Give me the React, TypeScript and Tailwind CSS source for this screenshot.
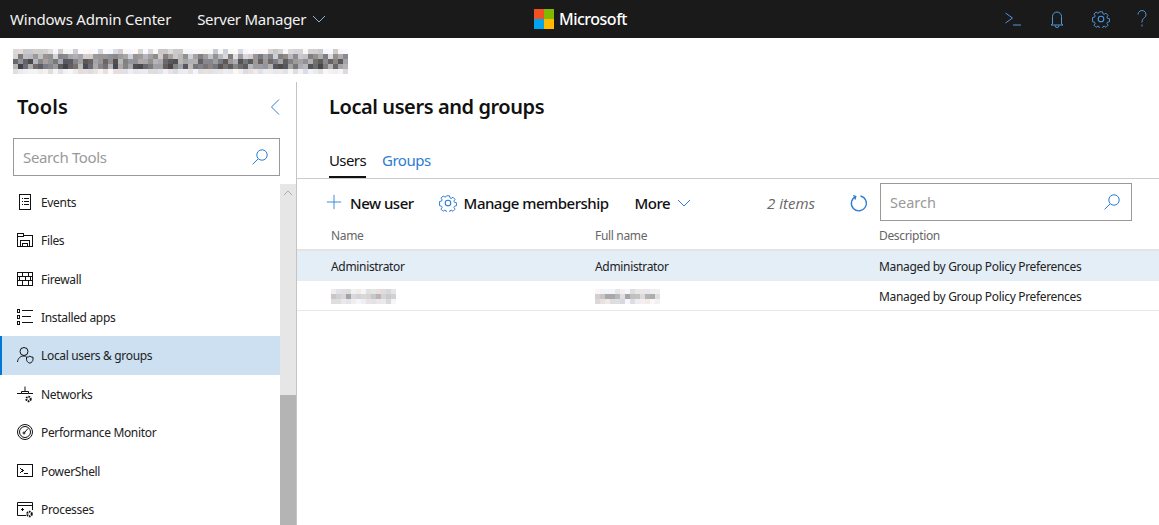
import React from "react";

const Mosaic = ({ w, h, cell, seed, small = false }: { w: number; h: number; cell: number; seed: number; small?: boolean }) => {
  const cols = Math.ceil(w / cell);
  const rows = Math.ceil(h / cell);
  const rects: React.ReactNode[] = [];
  let s = seed;
  const rnd = () => {
    s = (s * 9301 + 49297) % 233280;
    return s / 233280;
  };
  for (let r = 0; r < rows; r++) {
    for (let c = 0; c < cols; c++) {
      const n = rnd();
      let v: number;
      if (small) {
        v = r === 1 ? 160 + n * 65 : 215 + n * 32;
      } else if (r === 0) {
        v = n > 0.55 ? 170 + n * 50 : 245 + n * 8;
      } else if (r === rows - 1) {
        v = 218 + n * 30;
      } else if (r === 1) {
        v = 120 + n * 105;
      } else {
        v = 65 + n * 120;
      }
      const t = rnd();
      const red = Math.round(Math.min(255, v + (t > 0.7 ? 6 : 0)));
      const blue = Math.round(Math.min(255, v + (t < 0.3 ? 8 : 0)));
      rects.push(<rect key={`${r}-${c}`} x={c * cell} y={r * cell} width={cell} height={cell} fill={`rgb(${red},${Math.round(v)},${blue})`} />);
    }
  }
  return (
    <svg width={w} height={h} viewBox={`0 0 ${w} ${h}`} shapeRendering="crispEdges" className="block">
      {rects}
    </svg>
  );
};

const Svg = ({ children, size = 18, stroke = "#111", sw = 1, crisp = false }: { children: React.ReactNode; size?: number; stroke?: string; sw?: number; crisp?: boolean }) => (
  <svg width={size} height={size} viewBox="0 0 18 18" fill="none" stroke={stroke} strokeWidth={sw} shapeRendering={crisp ? "crispEdges" : undefined} className="block shrink-0">
    {children}
  </svg>
);

const Gear = ({ size = 18, stroke = "#2b7cd3" }: { size?: number; stroke?: string }) => (
  <Svg size={size} stroke={stroke} sw={1.1}>
    <circle cx="9" cy="9" r="2.800" />
    <path d="M7.300.8h3.400l.5 2.300 1.400.6 2-1.300 2.400 2.400-1.300 2 .6 1.400 2.300.5v3.400l-2.300.5-.6 1.400 1.300 2-2.400 2.400-2-1.300-1.400.6-.5 2.300H7.300l-.5-2.300-1.400-.6-2 1.300-2.400-2.400 1.300-2-.6-1.400-2.300-.5V7.300l2.300-.5.6-1.400-1.300-2L3.400 1l2 1.300 1.400-.6z" transform="translate(1.100 1.100) scale(0.88)" />
  </Svg>
);

const SearchIcon = () => (
  <Svg size={18} stroke="#2b7cd3">
    <circle cx="11" cy="7" r="5.200" />
    <path d="M7.200 10.800 1.600 16.400" />
  </Svg>
);

const icons: Record<string, React.ReactNode> = {
  Events: (
    <Svg crisp>
      <rect x="3.500" y="1.500" width="11" height="15" />
      <path d="M5.500 5.500h1M8 5.500h5M5.500 8.500h1M8 8.500h5M5.500 11.500h1M8 11.500h5" />
    </Svg>
  ),
  Files: (
    <Svg crisp>
      <path d="M1.500 15.500V2.500h6v2h9v11zM1.500 5.500h6" />
      <path d="M4.500 15.500V9.500h9v6M6.500 15.500v-3h5v3" />
    </Svg>
  ),
  Firewall: (
    <Svg crisp>
      <rect x="1.500" y="2.500" width="15" height="13" />
      <path d="M1.500 6.500h15M1.500 10.500h15M6.500 2.500v4M12.500 2.500v4M3.500 6.500v4M9.500 6.500v4M14.500 6.500v4M6.500 10.500v5M12.500 10.500v5" />
    </Svg>
  ),
  "Installed apps": (
    <Svg crisp>
      <rect x="1.500" y="1.500" width="2" height="3" />
      <rect x="1.500" y="7.500" width="2" height="3" />
      <rect x="1.500" y="13.500" width="2" height="3" />
      <path d="M6 2.500h10.500M6 8.500h8.500M6 14.500h10.500" />
    </Svg>
  ),
  "Local users & groups": (
    <Svg>
      <circle cx="8" cy="5.500" r="4" />
      <path d="M1.500 16c.3-3.500 2.600-6 6.500-6 .9 0 1.600.1 2.300.4" />
      <path d="M10.500 11.200c1.500 0 2.500-.4 3.300-1 .8.600 1.700 1 3.200 1v2c0 2-1.300 3.300-3.200 4-2-.7-3.300-2-3.300-4z" />
    </Svg>
  ),
  Networks: (
    <Svg>
      <path d="M1 8.500h4.500M12.500 8.500H17M9 1.500v4.500M5.500 8.500V6.500h7v2z" />
      <circle cx="12.500" cy="14" r="2.200" strokeWidth="2" strokeDasharray="1.500 0.800" />
    </Svg>
  ),
  "Performance Monitor": (
    <Svg>
      <circle cx="9" cy="9" r="7.500" />
      <circle cx="9" cy="9" r="5.500" />
      <circle cx="8" cy="10" r="1" />
      <path d="m8.500 9.500 3.500-4" />
    </Svg>
  ),
  PowerShell: (
    <Svg crisp>
      <rect x="1.500" y="2.500" width="15" height="12" />
      <path d="M4.500 6.500 7 8.500l-2.500 2M7.500 11.500h4" />
    </Svg>
  ),
  Processes: (
    <Svg>
      <path d="M10 15.500H1.500v-13h15V10M1.500 5.500h15" />
      <path d="M5 9.500h3M6.500 8v3" />
      <circle cx="13.500" cy="14" r="2.300" strokeWidth="2" strokeDasharray="1.500 0.800" />
    </Svg>
  ),
};

const tools = ["Events", "Files", "Firewall", "Installed apps", "Local users & groups", "Networks", "Performance Monitor", "PowerShell", "Processes"];

const Row = ({ name, full, selected, seed }: { name?: string; full?: string; selected?: boolean; seed?: number }) => (
  <div className={`grid h-[30px] grid-cols-[264px_284px_1fr] items-center pl-[34px] text-[12px] tracking-[-0.33px] text-[#222] ${selected ? "bg-[#e4eef7] pt-[2px]" : "border-b border-[#e8e8e8] pt-[2px]"}`}>
    <div>{name ?? <Mosaic w={65} h={15} cell={5} seed={seed!} small />}</div>
    <div>{full ?? <Mosaic w={65} h={15} cell={5} seed={seed! + 7} small />}</div>
    <div>Managed by Group Policy Preferences</div>
  </div>
);

export default function App() {
  return (
    <div className="flex h-[525px] w-[1159px] flex-col overflow-hidden bg-white font-['Noto_Sans',sans-serif] text-[#111]">
      <header className="flex h-[38px] shrink-0 items-center bg-[#1a1a1a] pl-[10px] text-[15px] text-[#f2f2f2]">
        <div className="flex w-[524px] items-center">
          <span className="tracking-[-0.2px]">Windows Admin Center</span>
          <span className="ml-[26px] tracking-[-0.25px]">Server Manager</span>
          <svg width="14" height="8" viewBox="0 0 14 8" fill="none" stroke="#8fb4dc" className="ml-[6px]">
            <path d="m1 1 6 6 6-6" />
          </svg>
        </div>
        <div className="grid h-[20px] w-[20px] grid-cols-2 gap-0">
          <div className="bg-[#f25022]" />
          <div className="bg-[#7fba00]" />
          <div className="bg-[#00a4ef]" />
          <div className="bg-[#ffb900]" />
        </div>
        <span className="ml-[5px] text-[16px] font-medium tracking-[-0.5px] text-white">Microsoft</span>
        <div className="ml-auto flex items-center gap-[26px] pr-[11px]">
          <Svg stroke="#4f97dd">
            <path d="m1.500 3 7 5-7 5M9 15h8" />
          </Svg>
          <Svg stroke="#4f97dd">
            <path d="M4.500 14V6.500a4.500 4.500 0 0 1 9 0V14l1.500 1H3zM7 15.500a2 2 0 0 0 4 0" />
          </Svg>
          <Gear stroke="#4f97dd" />
          <svg width="12" height="18" viewBox="0 0 12 18" fill="none" stroke="#4f97dd">
            <path d="M2 4.500a4 4 0 1 1 6.300 3.300C6.800 8.900 6 10 6 12.500M6 14.500v2" />
          </svg>
        </div>
      </header>

      <div className="flex h-[44px] shrink-0 items-center pt-[2px] pl-[13px]">
        <Mosaic w={335} h={25} cell={5} seed={42} />
      </div>

      <div className="flex min-h-0 flex-1">
        <aside className="flex w-[297px] shrink-0 flex-col border-r border-[#c4c4c4]">
          <div className="flex h-[56px] shrink-0 items-center justify-between pr-[16px] pb-[6px] pl-[17px]">
            <span className="text-[20px] font-semibold tracking-[0.2px]">Tools</span>
            <svg width="10" height="16" viewBox="0 0 10 16" fill="none" stroke="#2b7cd3">
              <path d="M9 .5 1.500 8 9 15.500" />
            </svg>
          </div>
          <div className="mr-[16px] ml-[13px] flex h-[38px] shrink-0 items-center justify-between border border-[#999] pr-[10px] pl-[9px] text-[15px] tracking-[-0.35px] text-[#999]">
            <span>Search Tools</span>
            <SearchIcon />
          </div>
          <div className="mt-[6.75px] flex min-h-0 flex-1">
            <ul className="flex-1">
              {tools.map((t) => {
                const sel = t === "Local users & groups";
                return (
                  <li
                    key={t}
                    className={`flex h-[38.375px] items-center gap-[7px] text-[12px] tracking-[-0.33px] text-[#222] ${sel ? "border-l-2 border-[#0078d4] bg-[#cce0f1] pl-[14px]" : "pl-[16px]"}`}
                  >
                    {icons[t]}
                    <span className="pt-[2px]">{t}</span>
                  </li>
                );
              })}
            </ul>
            <div className="mt-[1.25px] flex w-[16px] shrink-0 flex-col bg-[#e6e6e6]">
              <div className="flex h-[211px] justify-center pt-[6px]">
                <svg width="10" height="6" viewBox="0 0 10 6" fill="none" stroke="#aaa">
                  <path d="m1 5 4-4 4 4" />
                </svg>
              </div>
              <div className="flex-1 bg-[#b4b4b4]" />
            </div>
          </div>
        </aside>

        <main className="min-w-0 flex-1">
          <div className="flex h-[51px] items-center pb-[2px] pl-[32px] text-[20px] font-semibold tracking-[-0.42px]">Local users and groups</div>
          <div className="flex h-[46px] items-end gap-[16px] border-b border-[#ccc] pl-[32px] text-[15px] tracking-[-0.5px]">
            <span className="flex h-[30px] items-center border-b-2 border-[#111] pb-[4px] tracking-[-0.6px]">Users</span>
            <span className="flex h-[30px] items-center pb-[6px] text-[#2b7cd3]">Groups</span>
          </div>
          <div className="flex h-[46px] items-center pr-[27px] pl-[29px] text-[15px] font-medium tracking-[-0.5px]">
            <Svg size={16} stroke="#2b7cd3">
              <path d="M9 1v16M1 9h16" />
            </Svg>
            <span className="ml-[8px] pt-[3px]">New user</span>
            <span className="ml-[25px] pt-[1px]">
              <Gear size={18} />
            </span>
            <span className="ml-[7px] pt-[3px]">Manage membership</span>
            <span className="ml-[26px] pt-[3px]">More</span>
            <svg width="14" height="8" viewBox="0 0 14 8" fill="none" stroke="#2b7cd3" className="mt-[2px] ml-[7px]">
              <path d="m1 1 6 6 6-6" />
            </svg>
            <span className="ml-auto pt-[2px] font-['Open_Sans',sans-serif] text-[15px] font-normal tracking-normal text-[#666] italic">2 items</span>
            <span className="ml-[35px] pt-[2px]">
              <Svg stroke="#2b7cd3" sw={1.300}>
                <path d="M5.500 2.600a7.500 7.500 0 1 0 5-.6M3.200 1.500l2.600 1-.8 3" />
              </Svg>
            </span>
            <div className="ml-[12px] flex h-[38px] w-[252px] items-center justify-between border border-[#999] pr-[10px] pl-[9px] text-[14.5px] font-normal tracking-normal text-[#999]">
              <span className="pt-[2px]">Search</span>
              <SearchIcon />
            </div>
          </div>
          <div className="grid h-[26px] grid-cols-[264px_284px_1fr] items-center border-b-2 border-[#e4e4e4] pb-[2px] pl-[34px] text-[12px] tracking-[-0.33px] text-[#666]">
            <div>Name</div>
            <div>Full name</div>
            <div>Description</div>
          </div>
          <Row name="Administrator" full="Administrator" selected />
          <Row seed={11} />
        </main>
      </div>
    </div>
  );
}
